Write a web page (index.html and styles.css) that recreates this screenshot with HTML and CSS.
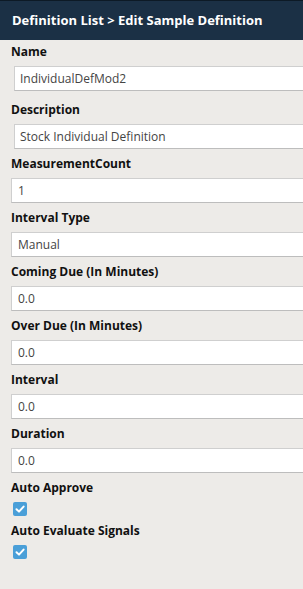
FILE: index.html
```html
<!DOCTYPE html>
<html lang="en">
<head>
  <meta charset="UTF-8">
  <meta name="viewport" content="width=device-width, initial-scale=1.0">
  <title>Edit Sample Definition</title>
  <link rel="stylesheet" href="styles.css">
</head>
<body>

  <!-- Header -->
  <div class="header">
    <span class="crumb">Definition List</span> &gt; <span>Edit Sample Definition</span>
  </div>

  <!-- Edit Form -->
  <div class="form">
    <div class="field first">
      <label for="name">Name</label>
      <input type="text" id="name" class="wide" value="IndividualDefMod2">
    </div>
    <div class="field">
      <label for="description">Description</label>
      <input type="text" id="description" class="wide" value="Stock Individual Definition">
    </div>
    <div class="field">
      <label for="count">MeasurementCount</label>
      <input type="text" id="count" value="1">
    </div>
    <div class="field">
      <label for="interval-type">Interval Type</label>
      <input type="text" id="interval-type" value="Manual">
    </div>
    <div class="field">
      <label for="coming-due">Coming Due (In Minutes)</label>
      <input type="text" id="coming-due" value="0.0">
    </div>
    <div class="field">
      <label for="over-due">Over Due (In Minutes)</label>
      <input type="text" id="over-due" value="0.0">
    </div>
    <div class="field">
      <label for="interval">Interval</label>
      <input type="text" id="interval" value="0.0">
    </div>
    <div class="field">
      <label for="duration">Duration</label>
      <input type="text" id="duration" value="0.0">
    </div>
    <div class="field">
      <label>Auto Approve</label>
      <span class="check"><svg viewBox="0 0 14 14" width="14" height="14"><path d="M3.5 7.2 L6 9.6 L10.6 4.6" fill="none" stroke="#fff" stroke-width="2" stroke-linecap="round" stroke-linejoin="round"/></svg></span>
    </div>
    <div class="field">
      <label>Auto Evaluate Signals</label>
      <span class="check"><svg viewBox="0 0 14 14" width="14" height="14"><path d="M3.5 7.2 L6 9.6 L10.6 4.6" fill="none" stroke="#fff" stroke-width="2" stroke-linecap="round" stroke-linejoin="round"/></svg></span>
    </div>
  </div>

</body>
</html>
```

FILE: styles.css
```css
/* General Styles */
html, body {
  height: 100%;
}

body {
  font-family: 'Open Sans', 'Noto Sans', sans-serif;
  background-color: #edebe8;
  margin: 0;
  padding: 0;
  color: #111;
  overflow: hidden;
}

/* Header */
.header {
  height: 40px;
  box-sizing: border-box;
  border-top: 1px solid #0d1a26;
  padding: 0 12px;
  background-color: #1b3045;
  color: #fff;
  font-size: 13px;
  font-weight: bold;
  line-height: 39px;
  white-space: nowrap;
}

/* Form */
.form {
  padding: 3px 0 0 11px;
}

.field {
  margin-bottom: 6px;
}

.field.first {
  margin-bottom: 10px;
}

label {
  display: block;
  height: 18px;
  margin-bottom: 5px;
  font-size: 12px;
  font-weight: bold;
  line-height: 18px;
  white-space: nowrap;
}

input[type="text"] {
  display: block;
  width: 320px;
  height: 25px;
  padding: 0 6px;
  border: 1px solid #cfcfcf;
  border-bottom-color: #bdbdbd;
  background-color: #fff;
  box-sizing: border-box;
  font-family: inherit;
  font-size: 12px;
  color: #444;
}

input.wide {
  margin-left: 3px;
  padding-left: 5px;
}

/* Checkboxes */
.check {
  display: block;
  width: 14px;
  height: 14px;
  margin-left: 2px;
  border-radius: 2px;
  background-color: #4a9fd8;
}

.check svg {
  display: block;
}
```
